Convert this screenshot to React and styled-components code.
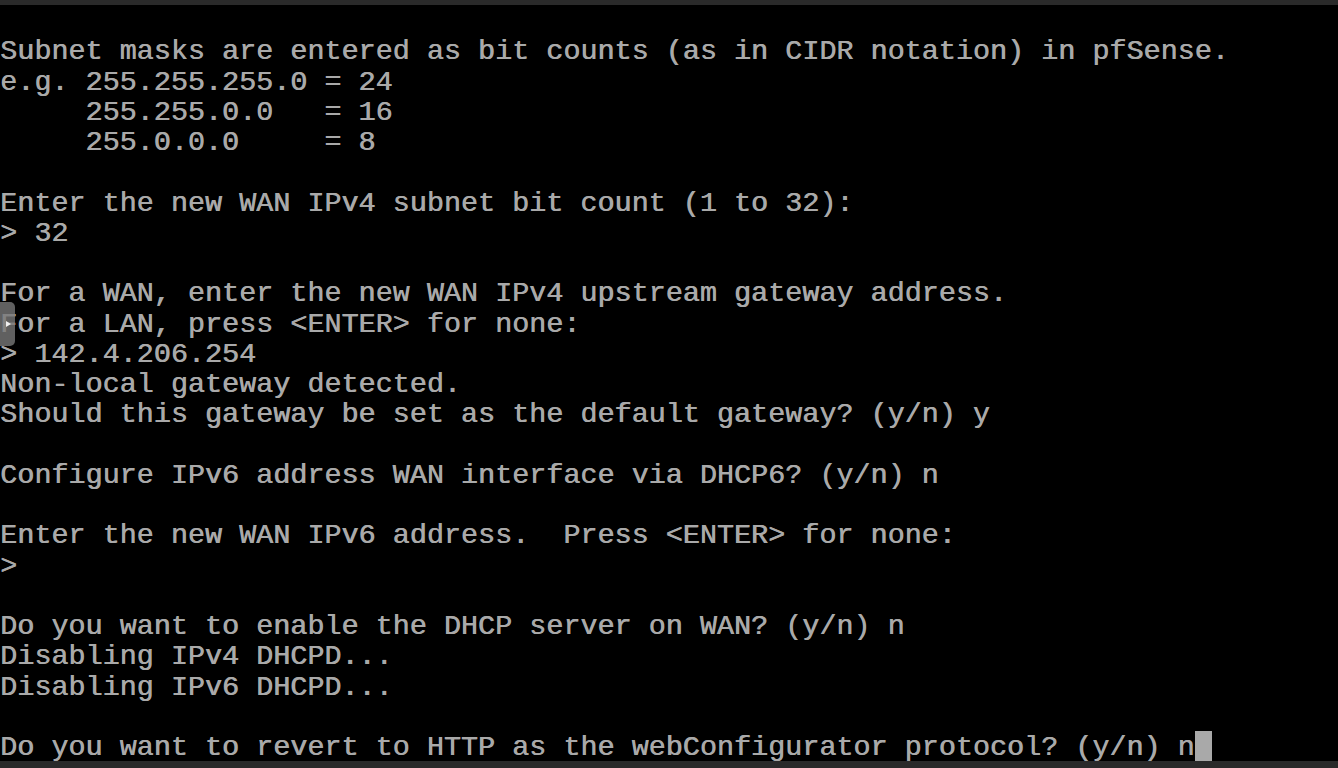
import React from "react";
import styled, { createGlobalStyle } from "styled-components";

const GlobalStyle = createGlobalStyle`
  html, body {
    margin: 0;
    padding: 0;
    background: #000;
    overflow: hidden;
  }
`;

const StyledScreen = styled.div`
  position: relative;
  width: 1338px;
  height: 768px;
  display: flex;
  flex-direction: column;
  background: #000;
  overflow: hidden;
`;

const StyledBar = styled.div`
  height: ${({ h }) => h};
  flex: ${({ grow }) => (grow ? "1" : "none")};
  background: #2a2a2a;
`;

const StyledConsole = styled.pre`
  margin: 0;
  padding: 0;
  font-family: "Liberation Mono", "DejaVu Sans Mono", monospace;
  font-size: 28.45px;
  line-height: 30.26px;
  color: #a9a9a9;
  white-space: pre;
  text-shadow: 0.6px 0 0 #a9a9a9;
`;

const StyledLine = styled.div`
  height: 30.26px;
  display: flex;
  align-items: stretch;
`;

const StyledText = styled.span`
  position: relative;
  top: 2px;
`;

const StyledCursor = styled.span`
  display: inline-block;
  width: 17px;
  background: #a9a9a9;
`;

const StyledSideTab = styled.div`
  position: absolute;
  left: 0;
  top: 302px;
  width: 15px;
  height: 44px;
  border-radius: 0 5px 5px 0;
  background: rgba(120, 120, 120, 0.8);
  display: flex;
  align-items: center;
  justify-content: center;

  &::after {
    content: "";
    width: 0;
    height: 0;
    border-top: 3.5px solid transparent;
    border-bottom: 3.5px solid transparent;
    border-left: 5px solid #f0f0f0;
    margin-left: 1px;
  }
`;

const lines = [
  "",
  "Subnet masks are entered as bit counts (as in CIDR notation) in pfSense.",
  "e.g. 255.255.255.0 = 24",
  "     255.255.0.0   = 16",
  "     255.0.0.0     = 8",
  "",
  "Enter the new WAN IPv4 subnet bit count (1 to 32):",
  "> 32",
  "",
  "For a WAN, enter the new WAN IPv4 upstream gateway address.",
  "For a LAN, press <ENTER> for none:",
  "> 142.4.206.254",
  "Non-local gateway detected.",
  "Should this gateway be set as the default gateway? (y/n) y",
  "",
  "Configure IPv6 address WAN interface via DHCP6? (y/n) n",
  "",
  "Enter the new WAN IPv6 address.  Press <ENTER> for none:",
  ">",
  "",
  "Do you want to enable the DHCP server on WAN? (y/n) n",
  "Disabling IPv4 DHCPD...",
  "Disabling IPv6 DHCPD...",
  "",
];

const prompt = "Do you want to revert to HTTP as the webConfigurator protocol? (y/n) n";

const App = () => (
  <>
    <GlobalStyle />
    <StyledScreen>
      <StyledBar h="5px" />
      <StyledConsole>
        {lines.map((line, i) => (
          <StyledLine key={i}>
            <StyledText>{line}</StyledText>
          </StyledLine>
        ))}
        <StyledLine>
          <StyledText>{prompt}</StyledText>
          <StyledCursor />
        </StyledLine>
      </StyledConsole>
      <StyledBar grow />
      <StyledSideTab />
    </StyledScreen>
  </>
);

export default App;
